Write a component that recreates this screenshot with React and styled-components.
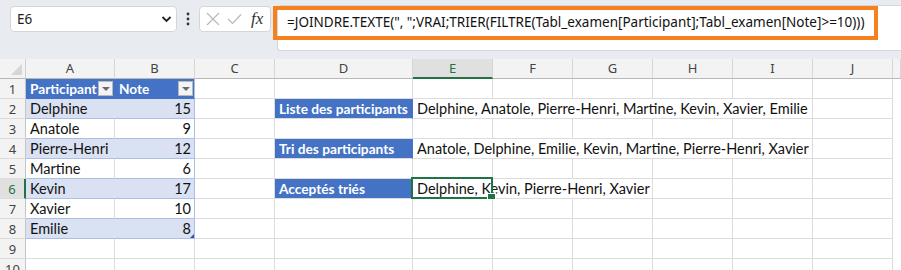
import React from 'react'
import styled, { createGlobalStyle } from 'styled-components'

const GREEN = '#217346'
const GRID = '#dcdcdc'
const BLUE = '#4472c4'
const BAND = '#d9e1f2'
const TLINE = '#a9bfe3'

const GlobalStyle = createGlobalStyle`
    html, body {
        margin: 0;
        padding: 0;
        background: #fff;
    }
    body {
        font-family: 'Lato', 'Noto Sans', sans-serif;
    }
    * {
        box-sizing: border-box;
    }
`

const COLS = [
    { key: 'A', w: 89 },
    { key: 'B', w: 80 },
    { key: 'C', w: 80 },
    { key: 'D', w: 138 },
    { key: 'E', w: 80 },
    { key: 'F', w: 80 },
    { key: 'G', w: 80 },
    { key: 'H', w: 80 },
    { key: 'I', w: 80 },
    { key: 'J', w: 80 },
    { key: 'K', w: 8, hidden: true },
]
const TEMPLATE = `26px ${COLS.map((c) => c.w + 'px').join(' ')}`

const PageStyled = styled.div`
    width: 901px;
    height: 270px;
    overflow: hidden;
    background: #e8ebef;
`

const TopBar = styled.div`
    height: 59px;
    display: flex;
    align-items: flex-start;
    padding: 5px 0 0 10px;
`

const NameBox = styled.div`
    width: 167px;
    height: 26px;
    margin-top: 1px;
    background: #fff;
    border: 1px solid #d3d7dc;
    border-radius: 4px;
    display: flex;
    align-items: center;
    justify-content: space-between;
    padding: 0 4px 0 6px;
    font-family: 'Noto Sans', sans-serif;
    font-size: 13.5px;
    color: #222;
`

const Dots = styled.div`
    width: 22px;
    height: 27px;
    display: flex;
    align-items: center;
    justify-content: center;
`

const FxBox = styled.div`
    width: 72px;
    height: 26px;
    margin-top: 1px;
    background: #fff;
    border: 1px solid #d3d7dc;
    border-radius: 4px;
    display: flex;
    align-items: center;
    padding: 0 4px 0 6px;
    gap: 7px;
`

const FxLabel = styled.span`
    font-family: 'Liberation Serif', serif;
    font-style: italic;
    font-size: 17px;
    color: #333;
    margin-left: 2px;
`

const FormulaWrap = styled.div`
    position: relative;
    flex: 1;
    margin-left: 6px;
`

const FormulaBox = styled.div`
    height: 46px;
    background: #fff;
    border: 1px solid #d3d7dc;
    border-right: none;
    border-radius: 4px 0 0 4px;
    padding: 6px 0 0 9px;
    font-family: 'Noto Sans', sans-serif;
    font-size: 13.5px;
    line-height: 20px;
    color: #111;
    white-space: nowrap;
`

const Highlight = styled.div`
    position: absolute;
    left: -4px;
    top: 1px;
    width: 605px;
    height: 34px;
    border: 4px solid #f5821f;
    pointer-events: none;
`

const Sheet = styled.div`
    background: #fff;
`

const Row = styled.div`
    display: grid;
    grid-template-columns: ${TEMPLATE};
    height: ${(p) => p.$h || 20}px;
`

const Corner = styled.div`
    position: relative;
    background: #f3f3f3;
    border-right: 1px solid #d0d0d0;
    border-bottom: 1px solid #b8b8b8;
    &::after {
        content: '';
        position: absolute;
        right: 3px;
        bottom: 3px;
        border-style: solid;
        border-width: 0 0 11px 11px;
        border-color: transparent transparent #d6d6d6 transparent;
    }
`

const ColHead = styled.div`
    background: ${(p) => (p.$active ? '#e0e0e0' : '#f3f3f3')};
    color: ${(p) => (p.$active ? GREEN : '#444')};
    border-right: 1px solid #d6d6d6;
    border-bottom: ${(p) => (p.$active ? `2px solid ${GREEN}` : '1px solid #b8b8b8')};
    display: flex;
    align-items: center;
    justify-content: center;
    font-family: 'Noto Sans', sans-serif;
    font-size: 13px;
    padding-bottom: ${(p) => (p.$active ? 0 : 1)}px;
`

const RowHead = styled.div`
    background: ${(p) => (p.$active ? '#e0e0e0' : '#f3f3f3')};
    color: ${(p) => (p.$active ? GREEN : '#444')};
    border-right: ${(p) => (p.$active ? `2px solid ${GREEN}` : '1px solid #c4c4c4')};
    border-bottom: 1px solid ${GRID};
    display: flex;
    align-items: center;
    justify-content: center;
    font-family: 'Noto Sans', sans-serif;
    font-size: 13px;
`

const Cell = styled.div`
    position: relative;
    grid-column: span ${(p) => p.$span || 1};
    background: ${(p) => p.$fill || '#fff'};
    color: ${(p) => p.$color || '#111'};
    font-weight: ${(p) => (p.$bold ? 700 : 400)};
    font-size: ${(p) => (p.$bold ? 13.7 : 14.5)}px;
    border-right: 1px solid ${(p) => p.$br || GRID};
    border-bottom: 1px solid ${(p) => p.$bb || GRID};
    display: flex;
    align-items: center;
    justify-content: ${(p) => (p.$right ? 'flex-end' : 'space-between')};
    padding: 0 ${(p) => (p.$right ? 3 : 1)}px 0 4px;
    white-space: nowrap;
    overflow: visible;
`

const FilterBtn = styled.span`
    width: 15px;
    height: 15px;
    flex-shrink: 0;
    background: #f4f4f4;
    border: 1px solid #b9b9b9;
    display: flex;
    align-items: center;
    justify-content: center;
    &::after {
        content: '';
        border-style: solid;
        border-width: 4px 4px 0 4px;
        border-color: #6b6b6b transparent transparent transparent;
    }
`

const Selection = styled.div`
    position: absolute;
    left: -2px;
    top: -2px;
    width: 82px;
    height: 22px;
    border: 2px solid ${GREEN};
    pointer-events: none;
    &::after {
        content: '';
        position: absolute;
        right: -5px;
        bottom: -5px;
        width: 7px;
        height: 7px;
        background: ${GREEN};
        border: 1px solid #fff;
    }
`

const ResizeMark = styled.span`
    position: absolute;
    right: 0;
    bottom: 0;
    border-style: solid;
    border-width: 0 0 4px 4px;
    border-color: transparent transparent #2f5597 transparent;
`

const table = [
    ['Delphine', 15],
    ['Anatole', 9],
    ['Pierre-Henri', 12],
    ['Martine', 6],
    ['Kevin', 17],
    ['Xavier', 10],
    ['Emilie', 8],
]

const labels = {
    2: { d: 'Liste des participants', e: 'Delphine, Anatole, Pierre-Henri, Martine, Kevin, Xavier, Emilie', span: 5 },
    4: { d: 'Tri des participants', e: 'Anatole, Delphine, Emilie, Kevin, Martine, Pierre-Henri, Xavier', span: 5 },
    6: { d: 'Acceptés triés', e: 'Delphine, Kevin, Pierre-Henri, Xavier', span: 3, selected: true },
}

function TableCells({ n }) {
    if (n === 1) {
        return (
            <>
                <Cell $fill={BLUE} $color="#fff" $bold $br={BLUE} $bb={BLUE}>
                    Participant <FilterBtn />
                </Cell>
                <Cell $fill={BLUE} $color="#fff" $bold $br={TLINE} $bb={BLUE}>
                    Note <FilterBtn />
                </Cell>
            </>
        )
    }
    const item = table[n - 2]
    if (!item) {
        return (
            <>
                <Cell />
                <Cell />
            </>
        )
    }
    const band = n % 2 === 0
    return (
        <>
            <Cell $fill={band ? BAND : '#fff'} $br={band ? BAND : GRID} $bb={TLINE}>
                {item[0]}
            </Cell>
            <Cell $fill={band ? BAND : '#fff'} $br={TLINE} $bb={TLINE} $right>
                {item[1]}
                {n === 8 && <ResizeMark />}
            </Cell>
        </>
    )
}

function SheetRow({ n }) {
    const label = labels[n]
    const rest = label ? COLS.length - 5 - label.span : COLS.length - 5
    return (
        <Row>
            <RowHead $active={n === 6}>{n}</RowHead>
            <TableCells n={n} />
            <Cell />
            {label ? (
                <>
                    <Cell $fill={BLUE} $color="#fff" $bold $br={BLUE}>
                        {label.d}
                    </Cell>
                    <Cell $span={label.span}>
                        {label.e}
                        {label.selected && <Selection />}
                    </Cell>
                </>
            ) : (
                <>
                    <Cell />
                    <Cell />
                </>
            )}
            {Array.from({ length: label ? rest : rest - 1 }).map((_, i) => (
                <Cell key={i} />
            ))}
        </Row>
    )
}

export default function App() {
    return (
        <PageStyled>
            <GlobalStyle />
            <TopBar>
                <NameBox>
                    <span>E6</span>
                    <svg width="11" height="8" viewBox="0 0 11 8">
                        <path d="M1.5 2 L5.5 6 L9.5 2" fill="none" stroke="#222" strokeWidth="1.8" />
                    </svg>
                </NameBox>
                <Dots>
                    <svg width="4" height="14" viewBox="0 0 4 14">
                        <circle cx="2" cy="2" r="1.4" fill="#333" />
                        <circle cx="2" cy="7" r="1.4" fill="#333" />
                        <circle cx="2" cy="12" r="1.4" fill="#333" />
                    </svg>
                </Dots>
                <FxBox>
                    <svg width="14" height="14" viewBox="0 0 14 14">
                        <path d="M1 1 L13 13 M13 1 L1 13" stroke="#b5b5b5" strokeWidth="1.1" />
                    </svg>
                    <svg width="15" height="12" viewBox="0 0 15 12">
                        <path d="M1 6 L5.5 10.5 L14 1.5" fill="none" stroke="#b5b5b5" strokeWidth="1.1" />
                    </svg>
                    <FxLabel>fx</FxLabel>
                </FxBox>
                <FormulaWrap>
                    <FormulaBox>
                        =JOINDRE.TEXTE(", ";VRAI;TRIER(FILTRE(Tabl_examen[Participant];Tabl_examen[Note]&gt;=10)))
                    </FormulaBox>
                    <Highlight />
                </FormulaWrap>
            </TopBar>
            <Sheet>
                <Row>
                    <Corner />
                    {COLS.map((c) => (
                        <ColHead key={c.key} $active={c.key === 'E'}>
                            {c.hidden ? '' : c.key}
                        </ColHead>
                    ))}
                </Row>
                {[1, 2, 3, 4, 5, 6, 7, 8, 9, 10].map((n) => (
                    <SheetRow key={n} n={n} />
                ))}
            </Sheet>
        </PageStyled>
    )
}
